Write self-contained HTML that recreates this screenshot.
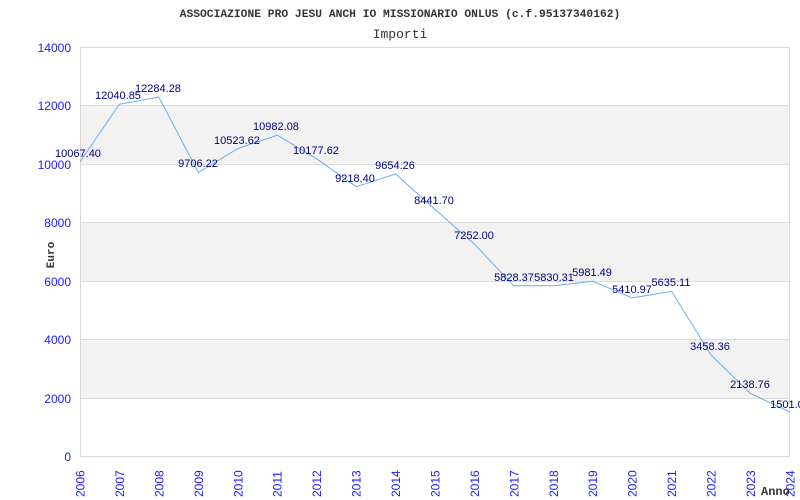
<!DOCTYPE html>
<html><head><meta charset="utf-8"><style>body{margin:0;background:#fff}svg{display:block}</style></head><body>
<svg width="800" height="500" xmlns="http://www.w3.org/2000/svg">
<rect width="800" height="500" fill="#fff"/>
<rect x="80" y="105" width="710" height="59" fill="#f2f2f2"/>
<rect x="80" y="222" width="710" height="59" fill="#f2f2f2"/>
<rect x="80" y="339" width="710" height="59" fill="#f2f2f2"/>
<g stroke="#dddddd" stroke-width="1">
<line x1="80" y1="105.5" x2="790" y2="105.5"/><line x1="80" y1="164.5" x2="790" y2="164.5"/>
<line x1="80" y1="222.5" x2="790" y2="222.5"/><line x1="80" y1="281.5" x2="790" y2="281.5"/>
<line x1="80" y1="339.5" x2="790" y2="339.5"/><line x1="80" y1="398.5" x2="790" y2="398.5"/>
</g>
<rect x="80.5" y="47.5" width="709" height="409" fill="none" stroke="#d8d8d8"/>
<text x="400" y="17" text-anchor="middle" font-family="Liberation Mono, monospace" font-weight="bold" font-size="11.3" fill="#333">ASSOCIAZIONE PRO JESU ANCH IO MISSIONARIO ONLUS (c.f.95137340162)</text>
<text x="400" y="38" text-anchor="middle" font-family="Liberation Mono, monospace" font-size="13" fill="#333">Importi</text>
<g font-family="Liberation Sans, sans-serif" font-size="12" fill="#1a1aff" text-anchor="end">
<text x="71" y="52">14000</text><text x="71" y="110">12000</text><text x="71" y="169">10000</text>
<text x="71" y="227">8000</text><text x="71" y="286">6000</text><text x="71" y="344">4000</text>
<text x="71" y="403">2000</text><text x="71" y="461">0</text>
</g>
<text transform="translate(54,255) rotate(-90)" text-anchor="middle" font-family="Liberation Mono, monospace" font-weight="bold" font-size="11" fill="#333">Euro</text>
<g font-family="Liberation Sans, sans-serif" font-size="12" fill="#1a1aff">
<text transform="translate(84.5,497) rotate(-90)">2006</text>
<text transform="translate(123.9,497) rotate(-90)">2007</text>
<text transform="translate(163.4,497) rotate(-90)">2008</text>
<text transform="translate(202.8,497) rotate(-90)">2009</text>
<text transform="translate(242.3,497) rotate(-90)">2010</text>
<text transform="translate(281.7,497) rotate(-90)">2011</text>
<text transform="translate(321.1,497) rotate(-90)">2012</text>
<text transform="translate(360.6,497) rotate(-90)">2013</text>
<text transform="translate(400,497) rotate(-90)">2014</text>
<text transform="translate(439.5,497) rotate(-90)">2015</text>
<text transform="translate(478.9,497) rotate(-90)">2016</text>
<text transform="translate(518.3,497) rotate(-90)">2017</text>
<text transform="translate(557.8,497) rotate(-90)">2018</text>
<text transform="translate(597.2,497) rotate(-90)">2019</text>
<text transform="translate(636.7,497) rotate(-90)">2020</text>
<text transform="translate(676.1,497) rotate(-90)">2021</text>
<text transform="translate(715.5,497) rotate(-90)">2022</text>
<text transform="translate(755,497) rotate(-90)">2023</text>
<text transform="translate(794.5,497) rotate(-90)">2024</text>
</g>
<text x="761" y="495" font-family="Liberation Mono, monospace" font-weight="bold" font-size="12" fill="#333">Anno</text>
<polyline fill="none" stroke="#6aaef0" stroke-width="1" points="80,161.9 119.4,104.2 158.9,97.1 198.3,172.4 237.8,148.6 277.2,135.2 316.6,158.7 356.1,186.7 395.5,174 435,209.4 474.4,244.1 513.8,285.7 553.3,285.7 592.7,281.3 632.2,297.9 671.6,291.4 711,355 750.5,393.5 790,412.1"/>
<g font-family="Liberation Sans, sans-serif" font-size="11" fill="#000080" text-anchor="middle">
<text x="78" y="157">10067.40</text>
<text x="118" y="99">12040.85</text>
<text x="158" y="92">12284.28</text>
<text x="198" y="167">9706.22</text>
<text x="237" y="144">10523.62</text>
<text x="276" y="130">10982.08</text>
<text x="316" y="154">10177.62</text>
<text x="355" y="182">9218.40</text>
<text x="395" y="169">9654.26</text>
<text x="434" y="204">8441.70</text>
<text x="474" y="239">7252.00</text>
<text x="514" y="281">5828.37</text>
<text x="554" y="281">5830.31</text>
<text x="592" y="276">5981.49</text>
<text x="632" y="293">5410.97</text>
<text x="671" y="286">5635.11</text>
<text x="710" y="350">3458.36</text>
<text x="750" y="388">2138.76</text>
<text x="790" y="408">1501.00</text>
</g>
</svg>
</body></html>
